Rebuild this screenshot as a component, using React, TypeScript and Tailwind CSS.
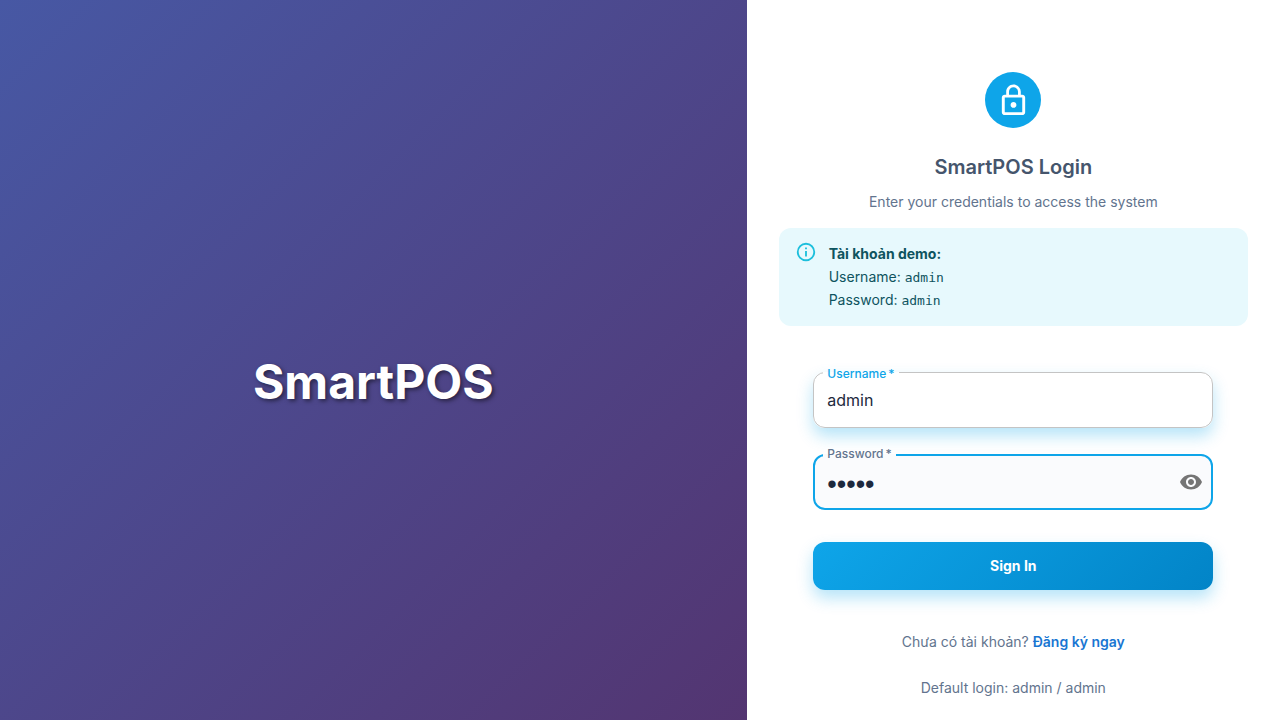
import { useState } from 'react';
import type { ReactNode } from 'react';

function LockIcon() {
  return (
    <svg viewBox="0 0 24 24" className="size-[35px] fill-current" aria-hidden="true">
      <path d="M12 17c1.1 0 2-.9 2-2s-.9-2-2-2-2 .9-2 2 .9 2 2 2m6-9h-1V6c0-2.76-2.24-5-5-5S7 3.24 7 6v2H6c-1.1 0-2 .9-2 2v10c0 1.1.9 2 2 2h12c1.1 0 2-.9 2-2V10c0-1.1-.9-2-2-2M8.9 6c0-1.71 1.39-3.1 3.1-3.1s3.1 1.39 3.1 3.1v2H8.9zM18 20H6V10h12z" />
    </svg>
  );
}

function InfoIcon() {
  return (
    <svg viewBox="0 0 24 24" className="size-[22px] shrink-0 fill-[#1cbfdc]" aria-hidden="true">
      <path d="M11,9H13V7H11M12,20C7.59,20 4,16.41 4,12C4,7.59 7.59,4 12,4C16.41,4 20,7.59 20,12C20,16.41 16.41,20 12,20M12,2A10,10 0 0,0 2,12A10,10 0 0,0 12,22A10,10 0 0,0 22,12A10,10 0 0,0 12,2M11,17H13V11H11V17Z" />
    </svg>
  );
}

function EyeIcon() {
  return (
    <svg viewBox="0 0 24 24" className="size-6 fill-current" aria-hidden="true">
      <path d="M12 4.5C7 4.5 2.73 7.61 1 12c1.73 4.39 6 7.5 11 7.5s9.27-3.11 11-7.5c-1.73-4.39-6-7.5-11-7.5M12 17c-2.76 0-5-2.24-5-5s2.24-5 5-5 5 2.24 5 5-2.24 5-5 5m0-8c-1.66 0-3 1.34-3 3s1.34 3 3 3 3-1.34 3-3-1.34-3-3-3" />
    </svg>
  );
}

interface FieldProps {
  id: string;
  label: string;
  frame: string;
  legend: string;
  children: ReactNode;
}

function Field({ id, label, frame, legend, children }: FieldProps) {
  return (
    <fieldset className={`rounded-xl ${frame}`}>
      <legend className={`px-1 text-xs font-medium ${legend}`}>
        <label htmlFor={id}>{label}&thinsp;*</label>
      </legend>
      <div className="flex items-center">{children}</div>
    </fieldset>
  );
}

export default function App() {
  const [visible, setVisible] = useState(false);

  return (
    <div className="grid min-h-screen grid-cols-[7fr_5fr] bg-white font-['Inter',sans-serif]">
      <section className="flex items-center justify-center bg-[linear-gradient(135deg,#4758a4_0%,#533571_100%)] pt-11">
        <h1 className="text-5xl font-bold text-white [text-shadow:2px_2px_4px_rgba(0,0,0,0.5)]">SmartPOS</h1>
      </section>

      <main className="flex flex-col items-center px-8 pt-18 text-sm text-slate-500">
        <div className="flex size-14 items-center justify-center rounded-full bg-[#0ea5e9] text-white">
          <LockIcon />
        </div>
        <h2 className="mt-6 text-xl leading-[30px] font-semibold text-slate-600">SmartPOS Login</h2>
        <p className="mt-2.5 leading-5">Enter your credentials to access the system</p>

        <div className="mt-4 flex w-full gap-3 rounded-xl bg-[#e7f9fd] px-4 pt-[13px] pb-[15px] text-[#0e545f]">
          <InfoIcon />
          <div className="flex flex-col pt-px leading-[23px]">
            <strong className="font-bold">Tài khoản demo:</strong>
            <span>
              Username: <code className="font-['DejaVu_Sans_Mono',monospace] text-[13px] leading-none">admin</code>
            </span>
            <span>
              Password: <code className="font-['DejaVu_Sans_Mono',monospace] text-[13px] leading-none">admin</code>
            </span>
          </div>
        </div>

        <form className="mt-9 flex w-full max-w-[400px] flex-col" onSubmit={(e) => e.preventDefault()}>
          <Field
            id="username"
            label="Username"
            frame="border border-[#c4c4c4] bg-white shadow-[0_8px_16px_rgba(14,165,233,0.3)]"
            legend="ml-[9px] pt-1 text-[#0ea5e9]"
          >
            <input
              id="username"
              type="text"
              defaultValue="admin"
              className="h-[45px] w-full min-w-0 bg-transparent px-[13px] pb-2.5 text-base text-slate-800 outline-none"
            />
          </Field>

          <div className="mt-[18px]">
            <Field
              id="password"
              label="Password"
              frame="border-2 border-[#0ea5e9] bg-[#fafbfd]"
              legend="ml-2 pb-0.5 text-slate-500"
            >
              <input
                id="password"
                type={visible ? 'text' : 'password'}
                defaultValue="admin"
                className={`h-11 w-full min-w-0 bg-transparent px-3 text-slate-800 outline-none ${
                  visible ? 'pb-2 text-base' : "pb-1 font-['Liberation_Sans',sans-serif] text-[27px]"
                }`}
              />
              <button
                type="button"
                aria-label="Toggle password visibility"
                onClick={() => setVisible(!visible)}
                className="mr-2 mb-2 text-[#757575]"
              >
                <EyeIcon />
              </button>
            </Field>
          </div>

          <button
            type="submit"
            className="mt-8 h-12 rounded-xl bg-[linear-gradient(135deg,#0ea5e9_0%,#0284c7_100%)] text-sm font-bold text-white shadow-[0_8px_16px_rgba(14,165,233,0.3)]"
          >
            Sign In
          </button>
        </form>

        <p className="mt-[42px] leading-5">
          Chưa có tài khoản?{' '}
          <a href="#register" className="font-semibold text-[#1976d2]">
            Đăng ký ngay
          </a>
        </p>
        <p className="mt-[26px] leading-5">Default login: admin / admin</p>
      </main>
    </div>
  );
}
